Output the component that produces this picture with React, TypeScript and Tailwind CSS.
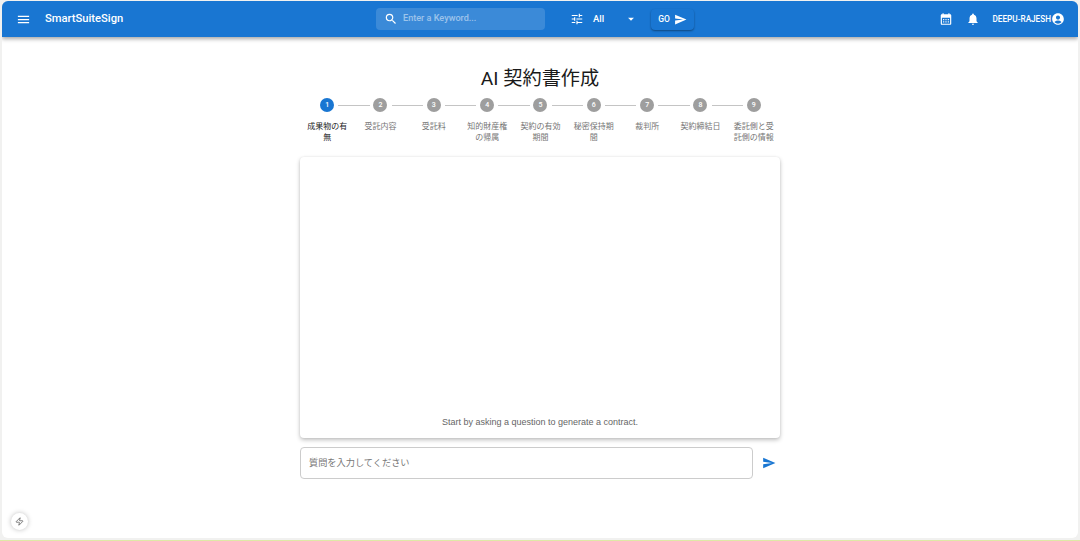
import { MdMenu, MdSearch, MdTune, MdArrowDropDown, MdSend, MdCalendarMonth, MdNotifications, MdAccountCircle } from "react-icons/md";
import { Zap } from "lucide-react";

const steps = [
  "成果物の有無",
  "受託内容",
  "受託料",
  "知的財産権の帰属",
  "契約の有効期間",
  "秘密保持期間",
  "裁判所",
  "契約締結日",
  "委託側と受託側の情報",
];

const jp = "font-['Roboto','Noto_Sans_CJK_JP',sans-serif]";

export default function App() {
  return (
    <div className={`h-[541px] w-[1080px] overflow-hidden bg-[#f1f1f0] flex flex-col ${jp}`}>
      <div className="relative mx-[2px] mt-[1px] h-[537px] rounded-[6px] bg-white flex flex-col shrink-0 overflow-hidden">
        <header className="h-[36px] shrink-0 bg-[#1976d2] text-white flex items-center shadow-[0_2px_4px_rgba(0,0,0,0.35)] pl-[14px] pr-[13px]">
          <div className="w-[360px] flex items-center shrink-0">
            <MdMenu size={15} />
            <span className="ml-[14px] text-[11.2px] font-medium leading-none">SmartSuiteSign</span>
          </div>
          <div className="w-[169px] h-[22px] rounded-[4px] bg-white/15 flex items-center pl-[8px] shrink-0">
            <MdSearch size={14} />
            <span className="ml-[5px] text-[9.1px] leading-none font-medium text-white/50 whitespace-nowrap">Enter a Keyword...</span>
          </div>
          <MdTune size={14} className="ml-[25px] shrink-0" />
          <span className="ml-[9px] text-[9.5px] font-medium leading-none w-[11px]">All</span>
          <MdArrowDropDown size={14} className="ml-[20px] shrink-0" />
          <button className="ml-[13px] w-[43px] h-[21px] rounded-[4px] bg-[#1976d2] shadow-[0_1px_2px_rgba(0,0,0,0.4)] flex items-center justify-center gap-[4px] text-[8.5px] font-medium">
            GO
            <MdSend size={13} />
          </button>
          <div className="ml-auto flex items-center">
            <MdCalendarMonth size={14} />
            <MdNotifications size={14} className="ml-[13px]" />
            <span className="ml-[13px] text-[8.2px] font-medium leading-none whitespace-nowrap">DEEPU-RAJESH</span>
            <MdAccountCircle size={14} />
          </div>
        </header>

        <main className="flex flex-col items-center flex-1 min-h-0">
          <h1 className="mt-[30px] text-[19.2px] leading-[24px] font-normal text-[#1a1a1a]">AI 契約書作成</h1>
          <ol className="mt-[7px] w-[481px] pl-[1px] grid grid-cols-9">
            {steps.map((label, i) => (
              <li key={label} className="relative flex flex-col items-center px-[6px]">
                {i > 0 && (
                  <span className="absolute top-[7px] left-[calc(-50%+11px)] right-[calc(50%+11px)] h-px bg-[#c4c4c4]" />
                )}
                <span
                  className={
                    i === 0
                      ? "h-[14px] w-[14px] rounded-full bg-[#1976d2] text-white text-[7px] font-medium flex items-center justify-center"
                      : "h-[14px] w-[14px] rounded-full bg-[#9e9e9e] text-white text-[7px] font-medium flex items-center justify-center"
                  }
                >
                  {i + 1}
                </span>
                <span
                  className={
                    i === 0
                      ? "mt-[9px] text-center text-[8px] leading-[11px] text-[#222222]"
                      : "mt-[9px] text-center text-[8px] leading-[11px] text-[#757575]"
                  }
                >
                  {label}
                </span>
              </li>
            ))}
          </ol>
          <section className="mt-[14px] w-[480px] h-[281px] rounded-[4px] bg-white shadow-[0_2px_4px_rgba(0,0,0,0.25),0_0_2px_rgba(0,0,0,0.08)] flex flex-col justify-end items-center pb-[9px] shrink-0">
            <p className="font-['Liberation_Sans',sans-serif] text-[9px] leading-[14px] text-[#666666]">Start by asking a question to generate a contract.</p>
          </section>
          <div className="mt-[9px] w-[480px] flex items-center">
            <div className="w-[453px] h-[32px] rounded-[4px] border border-[#cccccc] flex items-center pl-[8px] text-[9.2px] text-[#777777]">
              質問を入力してください
            </div>
            <MdSend size={14} className="ml-[9px] text-[#1976d2]" />
          </div>
        </main>

        <div className="absolute left-[9px] bottom-[8px] h-[17px] w-[17px] rounded-full bg-white shadow-[0_0_5px_rgba(0,0,0,0.25)] flex items-center justify-center text-[#555555]">
          <Zap size={9} />
        </div>
      </div>
      <div className="mt-[1.5px] h-[1.5px] shrink-0 bg-[#dfe8a6]" />
    </div>
  );
}
